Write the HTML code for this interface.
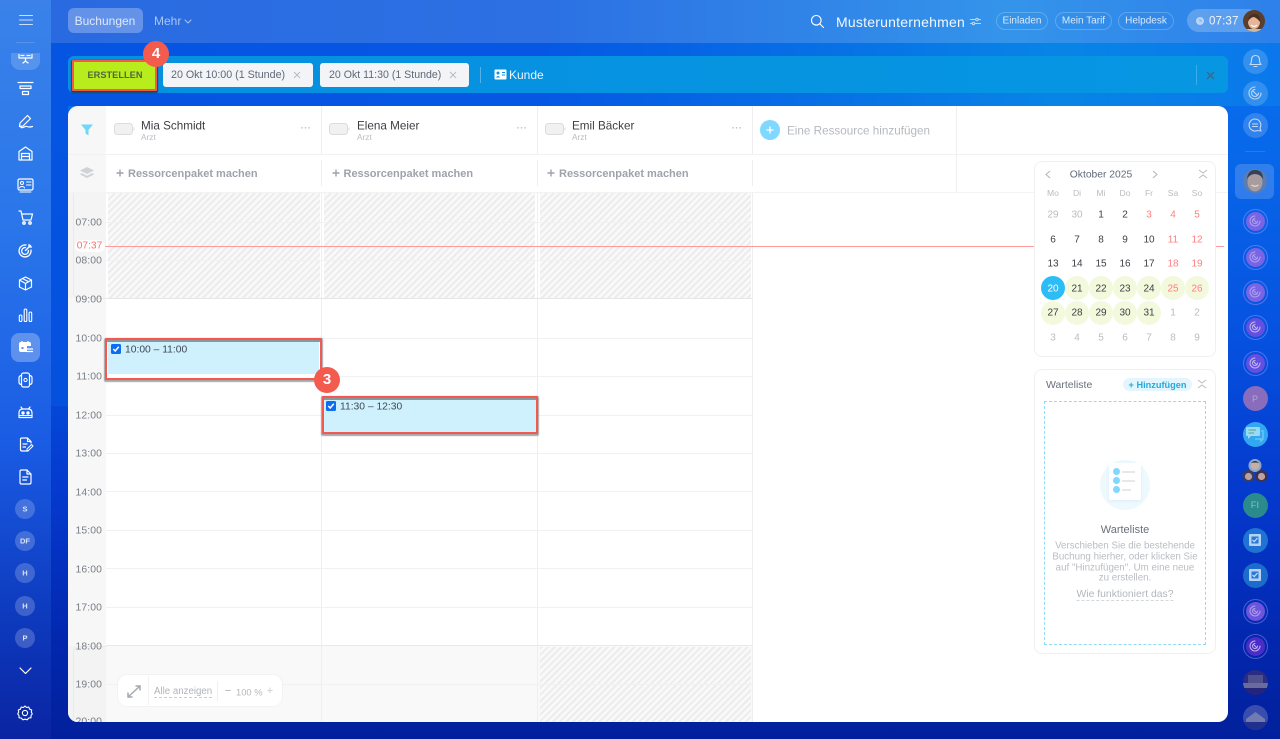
<!DOCTYPE html>
<html lang="de"><head><meta charset="utf-8"><title>Buchungen</title>
<style>
*{box-sizing:border-box}
html,body{margin:0;padding:0;width:1280px;height:739px;overflow:hidden;background:#0a40c8}
#w{left:0;top:0;width:1280px;height:739px;overflow:hidden;filter:blur(.35px);font-family:"Liberation Sans",sans-serif;background:linear-gradient(180deg,#0a74ee 0,#0868ea 20%,#0652e0 45%,#0438cc 68%,#0226ac 88%,#02209c 100%)}
div,span,svg{position:absolute}
.l{white-space:nowrap;transform:translateY(-50%)}
.c{white-space:nowrap;transform:translate(-50%,-50%)}
.i{fill:none;stroke:#fff;stroke-width:1.4;stroke-linecap:round;stroke-linejoin:round}
.g{height:1px;background:#f1f1f1;left:106px;width:646px}
.v{width:1px;background:#efefef}
.h{background:repeating-linear-gradient(135deg,#ececec 0 2px,#f9f9f9 2px 4.7px)}
.tm{font-size:10.4px;color:#777d86;letter-spacing:.1px}
.nm{font-size:11.7px;color:#3c3f44}
.ar{font-size:8.3px;color:#b9bcc1}
.dots{font-size:9px;color:#b5b8bc;font-weight:bold;letter-spacing:.5px}
.rp{font-size:11px;font-weight:bold;color:#9ea3ab}
.ch{height:24px;top:63px;background:#f2f4f7;border-radius:3px}
.pl{height:18px;top:12px;border:1px solid rgba(255,255,255,.22);border-radius:9px}
.pt{font-size:10px;color:#dbe9fb}
.sc{width:20px;height:20px;left:15px;border-radius:50%;background:rgba(255,255,255,.2)}
.rc{width:25px;height:25px;left:1242.5px;border-radius:50%;background:rgba(255,255,255,.17)}
.pc{width:25px;height:25px;left:1242.5px;border-radius:50%;border:1px solid rgba(190,170,255,.4)}
.pc i{position:absolute;left:2px;top:2px;width:19px;height:19px;border-radius:50%;background:#7864e4}
.d{font-size:10px;color:#3c3f44}
.m{font-size:10px;color:#b9bcc1}
.r{font-size:10px;color:#ff7f7f}
.w{font-size:8.6px;color:#b9bcc1}
.gc{width:24px;height:24px;border-radius:50%;background:#f3f9dd}
.bdg{width:26px;height:26px;border-radius:50%;background:#f45b4f;color:#fff;font-size:15px;font-weight:bold;text-align:center;line-height:26px;z-index:5}
.p{font-size:9.75px;color:#b9bdc3}
</style></head><body><div id="w">

<!-- background shaping -->
<div style="left:51px;top:43px;width:1229px;height:63px;background:linear-gradient(90deg,#0654e2 0,#0658e4 40%,#0884e6 82%,#0a78ec 100%)"></div>
<div style="left:51px;top:106px;width:17px;height:300px;background:linear-gradient(180deg,#0654e2,#0650de)"></div>

<!-- left rail + top bar -->
<div style="left:0;top:0;width:51px;height:739px;background:linear-gradient(180deg,#3a82ea 0,#2a76ea 30%,#1a5ce4 60%,#0e3cc0 82%,#0a24a2 100%)"></div>
<div style="left:51px;top:0;width:1229px;height:43px;background:linear-gradient(90deg,#2a6ae0 0,#2c70e4 40%,#3494ea 78%,#2e80ea 100%)"></div>

<!-- top bar -->
<svg style="left:19px;top:14px" width="14" height="12" class="i"><path d="M0.5 1.5H13.5M0.5 6H13.5M0.5 10.5H13.5" stroke-width="1" opacity=".75"/></svg>
<div style="left:16px;top:42px;width:19px;height:1px;background:rgba(255,255,255,.15)"></div>
<div style="left:68px;top:8px;width:75px;height:25px;border-radius:6px;background:rgba(255,255,255,.27)"></div>
<div class="c" style="left:105px;top:21px;font-size:12px;color:#dfe9fb">Buchungen</div>
<div class="l" style="left:154px;top:21px;font-size:12px;color:#a9c6f5">Mehr</div>
<svg style="left:184px;top:19px" width="8" height="5" class="i"><path d="M1 1L4 4L7 1" stroke="#a9c6f5" stroke-width="1"/></svg>

<svg style="left:810px;top:14px" width="15" height="15" class="i"><circle cx="6.3" cy="6.3" r="4.8" stroke-width="1.1"/><path d="M10 10L13.5 13.5" stroke-width="1.1"/></svg>
<div class="l" style="left:836px;top:21.5px;font-size:14px;color:#f2f7fe;letter-spacing:.22px">Musterunternehmen</div>
<svg style="left:970px;top:17px" width="11" height="9" class="i" opacity=".65"><path d="M0.5 2.5H10.5M0.5 6.5H10.5" stroke-width="1"/><circle cx="7" cy="2.5" r="1.3" fill="#5a9cea" stroke-width="1"/><circle cx="3.5" cy="6.5" r="1.3" fill="#5a9cea" stroke-width="1"/></svg>
<div class="pl" style="left:996px;width:52px"></div><div class="c pt" style="left:1022px;top:20.5px">Einladen</div>
<div class="pl" style="left:1055px;width:57px"></div><div class="c pt" style="left:1083.5px;top:20.5px">Mein Tarif</div>
<div class="pl" style="left:1118px;width:56px"></div><div class="c pt" style="left:1146px;top:20.5px">Helpdesk</div>
<div style="left:1187px;top:9px;width:73px;height:23px;border-radius:12px;background:rgba(255,255,255,.22)"></div>
<svg style="left:1196px;top:17px" width="8" height="8"><circle cx="4" cy="4" r="4" fill="#b8d4f8"/><path d="M4 2V4H6" stroke="#6fa0e8" stroke-width=".8" fill="none"/></svg>
<div class="l" style="left:1209px;top:21px;font-size:11.6px;color:#f0f6fe;letter-spacing:.1px">07:37</div>
<svg style="left:1243px;top:10px" width="22" height="22"><defs><clipPath id="a1"><circle cx="11" cy="11" r="11"/></clipPath></defs><g clip-path="url(#a1)"><rect width="22" height="22" fill="#5b3f2c"/><ellipse cx="11" cy="12" rx="6" ry="7" fill="#e6b697"/><path d="M5 12C5 5 9 4 12 4C16 4 18 8 17 12C15 9 12 7 10 7C8 8 6 9 5 12Z" fill="#4a2f20"/><path d="M8 15C10 17 12 17 14 15" stroke="#fff" stroke-width="1.2" fill="none"/><rect y="19" width="22" height="3" fill="#c8b8a8"/></g></svg>

<!-- left nav -->
<div style="left:11px;top:53px;width:29px;height:17px;border-radius:0 0 9px 9px;background:rgba(255,255,255,.17)"></div>
<svg style="left:18px;top:54px" width="15" height="10" class="i"><path d="M1 0V4H14V0M3 1.5H6M9 1.5H12M7.5 4V7M5 9L7.5 7L10 9" stroke-width="1.2"/></svg>
<svg style="left:17px;top:81px" width="17" height="15" class="i"><path d="M1 1.5H16M3 5H14V7.5H3ZM5.5 10.5H11.5V13.5H5.5Z" stroke-width="1.2"/></svg>
<svg style="left:18px;top:114px" width="16" height="15" class="i"><path d="M2 9L9.5 1.5L12.5 4.5L5 12L1.5 12.5ZM3 13.5C6 14.5 7 11.5 9 12.5C11 13.5 12 13 14.5 12.5" stroke-width="1.2"/></svg>
<svg style="left:18px;top:146px" width="15" height="15" class="i"><path d="M1 5.5L7.5 1L14 5.5V14H1ZM3.5 14V7.5H11.5V14M3.5 10.5H11.5" stroke-width="1.2"/></svg>
<svg style="left:17px;top:178px" width="17" height="15" class="i"><rect x="1" y="1" width="15" height="11" rx="1.5" stroke-width="1.2"/><circle cx="5" cy="5" r="1.5" stroke-width="1"/><path d="M2.5 10C3 8 7 8 7.5 10M9.5 4H14M9.5 7H14M3 14H14" stroke-width="1"/></svg>
<svg style="left:18px;top:210px" width="16" height="15" class="i"><path d="M1 1H3L5 10H13L14.5 4H3.5" stroke-width="1.2"/><circle cx="6" cy="13" r="1.2"/><circle cx="12" cy="13" r="1.2"/></svg>
<svg style="left:18px;top:243px" width="15" height="15" class="i"><path d="M8 2A6 6 0 1 0 13 7M7.5 4.6A3.4 3.4 0 1 0 10.4 7.5M7.5 7.5L12.5 2.5M11 1.5V4H13.5" stroke-width="1.3"/></svg>
<svg style="left:18px;top:276px" width="15" height="15" class="i"><path d="M7.5 1L13.5 4V11L7.5 14L1.5 11V4ZM1.5 4L7.5 7.5L13.5 4M7.5 7.5V14M4.5 2.5L10.5 5.7" stroke-width="1.2"/></svg>
<svg style="left:18px;top:308px" width="15" height="14" class="i"><rect x="1.3" y="7" width="2.6" height="6.5" rx="1.3" stroke-width="1.1"/><rect x="6.2" y="1" width="2.6" height="12.5" rx="1.3" stroke-width="1.1"/><rect x="11.1" y="4" width="2.6" height="9.5" rx="1.3" stroke-width="1.1"/></svg>
<div style="left:11px;top:333px;width:29px;height:29px;border-radius:8px;background:rgba(255,255,255,.28)"></div>
<svg style="left:18px;top:340px" width="16" height="15"><path d="M1 4Q1 2 3 2H11Q13 2 13 4V6H9V12H3Q1 12 1 10Z" fill="#fff"/><path d="M4 1V3M10 1V3" stroke="#fff" stroke-width="1.3"/><path d="M9 9H15M9 11.5H15" stroke="#fff" stroke-width="1.2"/><rect x="3.5" y="7" width="2" height="2" fill="#5a90ee"/></svg>
<svg style="left:18px;top:372px" width="15" height="16" class="i"><rect x="3.5" y="1" width="8" height="14" rx="2" stroke-width="1.2"/><circle cx="7.5" cy="8" r="1.6" stroke-width="1"/><path d="M3.5 3.5Q1 3.5 1 6V10Q1 12.5 3.5 12.5M11.5 3.5Q14 3.5 14 6V10Q14 12.5 11.5 12.5" stroke-width="1.2"/></svg>
<svg style="left:18px;top:405px" width="15" height="14" class="i"><path d="M1 8Q1 4 5 4H10Q14 4 14 8V12.5H1ZM3 2L4.5 4M12 2L10.5 4" stroke-width="1.2"/><circle cx="5" cy="8" r="1" fill="#fff"/><circle cx="10" cy="8" r="1" fill="#fff"/><path d="M1 10.5H14" stroke-width="1"/></svg>
<svg style="left:19px;top:437px" width="15" height="15" class="i"><path d="M9 14H3Q1.5 14 1.5 12.5V2.5Q1.5 1 3 1H8.5L12 4.5V6M8.5 1V4.5H12M4 7H8M4 10H6.5" stroke-width="1.2"/><path d="M8 12L12.5 7.5L14 9L9.5 13.5L8 14Z" stroke-width="1"/></svg>
<svg style="left:19px;top:469px" width="13" height="16" class="i"><path d="M2.5 1H8L12 5V13.5Q12 15 10.5 15H2.5Q1 15 1 13.5V2.5Q1 1 2.5 1ZM8 1V5H12M3.8 8H9M3.8 11H7.5" stroke-width="1.2"/></svg>
<div class="sc" style="top:499px"></div><div class="c" style="left:25px;top:509px;font-size:7.5px;font-weight:bold;color:#d8e4fb">S</div>
<div class="sc" style="top:531px"></div><div class="c" style="left:25px;top:541px;font-size:7.5px;font-weight:bold;color:#d8e4fb">DF</div>
<div class="sc" style="top:563px"></div><div class="c" style="left:25px;top:573px;font-size:7.5px;font-weight:bold;color:#d8e4fb">H</div>
<div class="sc" style="top:596px"></div><div class="c" style="left:25px;top:606px;font-size:7.5px;font-weight:bold;color:#d8e4fb">H</div>
<div class="sc" style="top:628px"></div><div class="c" style="left:25px;top:638px;font-size:7.5px;font-weight:bold;color:#d8e4fb">P</div>
<svg style="left:19px;top:667px" width="13" height="8" class="i"><path d="M1 1L6.5 6.5L12 1" stroke-width="1.2"/></svg>
<svg style="left:17px;top:705px" width="16" height="16" class="i"><path d="M8 1L9.6 2.5L11.8 2.1L12.6 4.2L14.7 5L14.3 7.2L15.3 8.8L14 10.6L14 12.8L11.8 13L10.2 14.8L8 14.2L5.8 14.8L4.2 13L2 12.8L2 10.6L.7 8.8L1.7 7.2L1.3 5L3.4 4.2L4.2 2.1L6.4 2.5Z" stroke-width="1.1"/><circle cx="8" cy="8" r="2.6" stroke-width="1.1"/></svg>

<!-- right rail -->
<div class="rc" style="top:48.5px"></div>
<svg style="left:1249px;top:54px" width="13" height="14" class="i" opacity=".7"><path d="M1 10.5Q2.5 9 2.5 6Q2.5 1.5 6.5 1.5Q10.5 1.5 10.5 6Q10.5 9 12 10.5ZM5 12.5H8" stroke-width="1.1"/></svg>
<div class="rc" style="top:80.5px"></div>
<svg style="left:1248px;top:86px" width="14" height="14" class="i" opacity=".65"><path d="M7 1A6 6 0 1 0 13 7M7 3.5A3.5 3.5 0 1 0 10.5 7M5 5L9.5 9.5" stroke-width="1.1"/></svg>
<div class="rc" style="top:112.5px"></div>
<svg style="left:1248px;top:118px" width="14" height="14" class="i" opacity=".7"><path d="M7 1A6 6 0 1 0 9.5 12.5L13 13L12 10A6 6 0 0 0 7 1ZM4.5 6H9.5M9.5 8.5H4.5" stroke-width="1.1"/></svg>
<div style="left:1245px;top:151px;width:20px;height:1px;background:rgba(255,255,255,.12)"></div>
<div style="left:1235px;top:164px;width:39px;height:35px;border-radius:6px;background:rgba(255,255,255,.17)"></div>
<svg style="left:1243px;top:169px" width="24" height="24"><defs><clipPath id="a2"><circle cx="12" cy="12" r="12"/></clipPath></defs><g clip-path="url(#a2)"><rect width="24" height="24" fill="#5d7db0"/><ellipse cx="12" cy="13" rx="7.5" ry="9.5" fill="#a89c9e"/><path d="M4 10Q5 1 12 1Q20 1 20 10Q17 5 12 5Q7 5 4 10Z" fill="#364058"/><path d="M8.5 16Q12 18.5 15.5 16" stroke="#dcdcde" stroke-width="1.2" fill="none"/></g></svg>

<div class="pc" style="top:208.5px"><i></i></div><div class="pc" style="top:244.5px"><i></i></div><div class="pc" style="top:279.5px"><i></i></div><div class="pc" style="top:314.5px"><i style="background:#6450e0"></i></div><div class="pc" style="top:350.5px"><i style="background:#6450e0"></i></div><div class="pc" style="top:598.5px"><i style="background:#6c54dc"></i></div><div class="pc" style="top:633.5px"><i style="background:#4a2cc8"></i></div>
<svg style="left:1249px;top:215px" width="12" height="12" class="i" opacity=".4"><path d="M6 1A5 5 0 1 0 11 6M6 3.5A2.5 2.5 0 1 0 8.5 6M4.5 4.5L8 8" stroke-width="1"/></svg>
<svg style="left:1249px;top:251px" width="12" height="12" class="i" opacity=".4"><path d="M6 1A5 5 0 1 0 11 6M6 3.5A2.5 2.5 0 1 0 8.5 6M4.5 4.5L8 8" stroke-width="1"/></svg>
<svg style="left:1249px;top:286px" width="12" height="12" class="i" opacity=".4"><path d="M6 1A5 5 0 1 0 11 6M6 3.5A2.5 2.5 0 1 0 8.5 6M4.5 4.5L8 8" stroke-width="1"/></svg>
<svg style="left:1249px;top:321px" width="12" height="12" class="i" opacity=".6"><path d="M6 1A5 5 0 1 0 11 6M6 3.5A2.5 2.5 0 1 0 8.5 6M4.5 4.5L8 8" stroke-width="1"/></svg>
<svg style="left:1249px;top:357px" width="12" height="12" class="i" opacity=".6"><path d="M6 1A5 5 0 1 0 11 6M6 3.5A2.5 2.5 0 1 0 8.5 6M4.5 4.5L8 8" stroke-width="1"/></svg>
<svg style="left:1249px;top:605px" width="12" height="12" class="i" opacity=".45"><path d="M6 1A5 5 0 1 0 11 6M6 3.5A2.5 2.5 0 1 0 8.5 6M4.5 4.5L8 8" stroke-width="1"/></svg>
<svg style="left:1249px;top:640px" width="12" height="12" class="i" opacity=".65"><path d="M6 1A5 5 0 1 0 11 6M6 3.5A2.5 2.5 0 1 0 8.5 6M4.5 4.5L8 8" stroke-width="1"/></svg>

<div class="rc" style="top:386px;background:#8a6cbc"></div><div class="c" style="left:1255px;top:398.5px;font-size:9px;color:#b5a5d8">P</div>
<div class="rc" style="top:421.5px;background:#32a8f0"></div>
<svg style="left:1245px;top:426px" width="20" height="17"><path d="M1 2Q1 1 2 1H14Q15 1 15 2V9Q15 10 14 10H6L3 13V10H2Q1 10 1 9Z" fill="#9cd8f8"/><path d="M3.5 4H11" stroke="#5cb088" stroke-width="1.2"/><path d="M3.5 7H9" stroke="#5cb088" stroke-width="1.2"/><path d="M16 5H18V13L16 15V13H10" fill="none" stroke="#6cc4f4" stroke-width="1.5"/></svg>
<svg style="left:1242px;top:457px" width="26" height="26"><circle cx="13" cy="8.5" r="6.5" fill="#8fa8c8"/><circle cx="13" cy="8.5" r="4.2" fill="#c4b0a8"/><path d="M9 6Q13 2 17 6Q13 5 9 6Z" fill="#28324a"/><circle cx="6.5" cy="19" r="6" fill="#3c3c58"/><circle cx="6.5" cy="19.5" r="3.6" fill="#b8a0a0"/><circle cx="19.5" cy="19" r="6" fill="#3c3250"/><circle cx="19.5" cy="19.5" r="3.6" fill="#c0a0a0"/></svg>
<div class="rc" style="top:492.5px;background:#2a8a8c"></div><div class="c" style="left:1255px;top:505px;font-size:9px;color:#8ac0c8;letter-spacing:.3px">FI</div>
<div class="rc" style="top:527.5px;background:#2072d4"></div>
<svg style="left:1248px;top:533px" width="14" height="14"><rect x="1" y="1" width="12" height="12" rx="1" fill="#b4d2f4"/><rect x="3.5" y="3.5" width="7" height="7" fill="#2a78d8"/><path d="M4.5 7L6.2 8.6L9.5 5" stroke="#c8dff8" stroke-width="1.2" fill="none"/></svg>
<div class="rc" style="top:562.5px;background:#1c6ccc"></div>
<svg style="left:1248px;top:568px" width="14" height="14"><rect x="1" y="1" width="12" height="12" rx="1" fill="#b4d2f4"/><rect x="3.5" y="3.5" width="7" height="7" fill="#2a78d8"/><path d="M4.5 7L6.2 8.6L9.5 5" stroke="#c8dff8" stroke-width="1.2" fill="none"/></svg>
<svg style="left:1242.5px;top:669.5px" width="25" height="25"><defs><clipPath id="a3"><circle cx="12.5" cy="12.5" r="12.5"/></clipPath></defs><g clip-path="url(#a3)"><rect width="25" height="25" fill="#2c2c80"/><rect x="5" y="5" width="15" height="9" fill="#50508e"/><rect x="0" y="13" width="25" height="5" fill="#6a6a9c"/><rect y="18" width="25" height="7" fill="#24247a"/></g></svg>
<svg style="left:1242.5px;top:704.5px" width="25" height="25"><defs><clipPath id="a4"><circle cx="12.5" cy="12.5" r="12.5"/></clipPath></defs><g clip-path="url(#a4)"><rect width="25" height="25" fill="#3a4cae"/><path d="M3 14L12.5 7L22 14V17H3Z" fill="#707cb0"/><rect y="17" width="25" height="8" fill="#20308e"/></g></svg>

<!-- action bar -->
<div style="left:68px;top:56px;width:1160px;height:37px;border-radius:6px;background:linear-gradient(90deg,#0690e0,#0696e2)"></div>
<div style="left:72px;top:60px;width:85px;height:30.5px;background:#b9ec1c;border:2px solid #f4584e;box-shadow:0 1px 1px 1px rgba(30,40,60,.7);border-radius:1px"></div>
<div class="c" style="left:115px;top:75px;font-size:9.2px;font-weight:bold;color:#50663e;letter-spacing:.05px">ERSTELLEN</div>
<div class="bdg" style="left:143px;top:41px">4</div>
<div class="ch" style="left:163px;width:150px"></div><div class="l" style="left:171px;top:75px;font-size:10.7px;color:#5f6a76">20 Okt 10:00 (1 Stunde)</div>
<svg style="left:293px;top:71px" width="8" height="8"><path d="M1 1L7 7M7 1L1 7" stroke="#b6bcc3" stroke-width="1"/></svg>
<div class="ch" style="left:320px;width:149px"></div><div class="l" style="left:329px;top:75px;font-size:10.6px;color:#5f6a76">20 Okt 11:30 (1 Stunde)</div>
<svg style="left:449px;top:71px" width="8" height="8"><path d="M1 1L7 7M7 1L1 7" stroke="#b6bcc3" stroke-width="1"/></svg>
<div style="left:480px;top:67px;width:1px;height:16px;background:rgba(255,255,255,.3)"></div>
<svg style="left:494px;top:69px" width="13" height="11"><rect x=".5" y=".5" width="12" height="10" rx="1" fill="#fff"/><circle cx="4" cy="4" r="1.5" fill="#0a92e0"/><path d="M1.8 8.5Q4 5.5 6.2 8.5Z" fill="#0a92e0"/><path d="M8 3.5H11M8 6H11" stroke="#0a92e0" stroke-width="1"/></svg>
<div class="l" style="left:509px;top:75px;font-size:12px;color:#eaf6fe">Kunde</div>
<div style="left:1196px;top:65px;width:1px;height:20px;background:rgba(255,255,255,.22)"></div>
<svg style="left:1206px;top:71px" width="9" height="9"><path d="M1 1L8 8M8 1L1 8" stroke="#44657f" stroke-width="1.3"/></svg>

<!-- card -->
<div style="left:68px;top:106px;width:1160px;height:616px;border-radius:10px;overflow:hidden;background:#fff">
 <div style="left:0;top:0;width:38px;height:616px;background:#f7f7f7"></div>
 <div style="left:0;top:86px;width:38px;height:106px;background:#f4f4f4"></div>
 <div style="left:5px;top:86px;width:34px;height:107px;border:1px solid #eaeaea;border-top:0;border-right:0;border-radius:0 0 0 6px"></div>
 <div style="left:38px;top:540px;width:646px;height:76px;background:#f9f9f9"></div>
 <div style="left:0;top:540px;width:38px;height:76px;background:#f3f3f3"></div>
 <div style="left:5px;top:540px;width:34px;height:76px;border:1px solid #eaeaea;border-bottom:0;border-right:0;border-radius:6px 0 0 0"></div>
 <div class="h" style="left:40px;top:86px;width:212px;height:106px"></div>
 <div class="h" style="left:256px;top:86px;width:211px;height:106px"></div>
 <div class="h" style="left:472px;top:86px;width:211px;height:106px"></div>
 <div class="h" style="left:472px;top:541px;width:211px;height:75px"></div>
</div>
<!-- header lines -->
<div class="g" style="left:68px;top:154px;width:1160px"></div>
<div class="g" style="left:68px;top:192px;width:1160px;background:#f3f3f3"></div>
<div class="v" style="left:321px;top:106px;height:48px"></div><div class="v" style="left:537px;top:106px;height:48px"></div><div class="v" style="left:752px;top:106px;height:48px"></div><div class="v" style="left:956px;top:106px;height:86px"></div>
<div class="v" style="left:321px;top:160px;height:26px"></div><div class="v" style="left:537px;top:160px;height:26px"></div><div class="v" style="left:752px;top:160px;height:26px"></div>
<div class="v" style="left:321px;top:192px;height:530px"></div><div class="v" style="left:537px;top:192px;height:530px"></div><div class="v" style="left:752px;top:192px;height:530px"></div>
<!-- grid lines -->
<div class="g" style="top:222px"></div><div class="g" style="top:260px"></div><div class="g" style="top:298px;background:#e6e6e6"></div><div class="g" style="top:338px"></div><div class="g" style="top:376px"></div><div class="g" style="top:415px"></div><div class="g" style="top:453px"></div><div class="g" style="top:491px"></div><div class="g" style="top:530px"></div><div class="g" style="top:568px"></div><div class="g" style="top:607px"></div><div class="g" style="top:645px;background:#e9e9e9"></div><div class="g" style="top:684px"></div>

<!-- filter column -->
<svg style="left:81px;top:124px" width="12" height="12"><path d="M0 .5H12L7.5 6V11.5L4.5 9.5V6Z" fill="#72d6fb"/></svg>
<svg style="left:80px;top:167px" width="14" height="12"><path d="M7 0L14 3.5L7 7L0 3.5Z" fill="#cfd2d6"/><path d="M1.5 6L7 8.8L12.5 6L14 7.5L7 11L0 7.5Z" fill="#cfd2d6"/></svg>

<!-- resource headers -->
<svg style="left:114px;top:123px" width="21" height="12"><rect x=".5" y=".5" width="18" height="11" rx="3" fill="#f1f1f1" stroke="#dcdcdc"/><path d="M20 4.5V7.5" stroke="#dcdcdc"/></svg>
<div class="l nm" style="left:141px;top:126px">Mia Schmidt</div><div class="l ar" style="left:141px;top:137px">Arzt</div><div class="c dots" style="left:306px;top:128px">···</div>
<svg style="left:329px;top:123px" width="21" height="12"><rect x=".5" y=".5" width="18" height="11" rx="3" fill="#f1f1f1" stroke="#dcdcdc"/><path d="M20 4.5V7.5" stroke="#dcdcdc"/></svg>
<div class="l nm" style="left:357px;top:126px">Elena Meier</div><div class="l ar" style="left:357px;top:137px">Arzt</div><div class="c dots" style="left:522px;top:128px">···</div>
<svg style="left:545px;top:123px" width="21" height="12"><rect x=".5" y=".5" width="18" height="11" rx="3" fill="#f1f1f1" stroke="#dcdcdc"/><path d="M20 4.5V7.5" stroke="#dcdcdc"/></svg>
<div class="l nm" style="left:572px;top:126px">Emil Bäcker</div><div class="l ar" style="left:572px;top:137px">Arzt</div><div class="c dots" style="left:737px;top:128px">···</div>
<div style="left:760px;top:120px;width:20px;height:20px;border-radius:50%;background:#7fd8ff"></div><svg style="left:766px;top:126px" width="8" height="8"><path d="M4 .5V7.5M.5 4H7.5" stroke="#fff" stroke-width="1.3"/></svg>
<div class="l" style="left:787px;top:131px;font-size:11.7px;color:#b5b9be">Eine Ressource hinzufügen</div>

<svg style="left:116px;top:169px" width="8" height="8"><path d="M4 .5V7.5M.5 4H7.5" stroke="#9ea3ab" stroke-width="1.4"/></svg><div class="l rp" style="left:128px;top:173.5px">Ressorcenpaket machen</div>
<svg style="left:332px;top:169px" width="8" height="8"><path d="M4 .5V7.5M.5 4H7.5" stroke="#9ea3ab" stroke-width="1.4"/></svg><div class="l rp" style="left:343.5px;top:173.5px">Ressorcenpaket machen</div>
<svg style="left:547px;top:169px" width="8" height="8"><path d="M4 .5V7.5M.5 4H7.5" stroke="#9ea3ab" stroke-width="1.4"/></svg><div class="l rp" style="left:559px;top:173.5px">Ressorcenpaket machen</div>

<!-- time labels -->
<div class="l tm" style="right:1178px;top:222.5px">07:00</div><div class="l tm" style="right:1178px;top:261px">08:00</div><div class="l tm" style="right:1178px;top:299.5px">09:00</div><div class="l tm" style="right:1178px;top:338.5px">10:00</div><div class="l tm" style="right:1178px;top:376.5px">11:00</div><div class="l tm" style="right:1178px;top:415.5px">12:00</div><div class="l tm" style="right:1178px;top:453.5px">13:00</div><div class="l tm" style="right:1178px;top:492.5px">14:00</div><div class="l tm" style="right:1178px;top:530.5px">15:00</div><div class="l tm" style="right:1178px;top:569.5px">16:00</div><div class="l tm" style="right:1178px;top:607.5px">17:00</div><div class="l tm" style="right:1178px;top:646.5px">18:00</div><div class="l tm" style="right:1178px;top:684.5px">19:00</div>
<div style="left:68px;top:716px;width:38px;height:6px;overflow:hidden"><div class="l tm" style="right:4px;top:6px">20:00</div></div>

<!-- now line -->
<div style="left:105px;top:246px;width:1119px;height:1px;background:#ff9a9a"></div>
<div class="c" style="left:89.5px;top:246px;width:30px;height:12px;background:#fff;border-radius:6px"></div>
<div class="c" style="left:89.5px;top:246px;font-size:10.2px;color:#fb7070">07:37</div>

<!-- events -->
<div style="left:105px;top:338px;width:217px;height:42px;background:#fff;border:2px solid #f4584e;box-shadow:0 1px 1px 1px rgba(60,60,60,.45);border-radius:1px"></div>
<div style="left:107px;top:340px;width:213px;height:2px;background:#8a989e"></div>
<div style="left:108px;top:342px;width:211px;height:32px;background:#cff1fd"></div>
<svg style="left:111px;top:344px" width="10" height="10"><rect width="10" height="10" rx="1.5" fill="#0b6ef0"/><path d="M2.3 5L4.2 7L7.8 2.8" stroke="#fff" stroke-width="1.5" fill="none"/></svg>
<div class="l" style="left:125px;top:349.5px;font-size:10.3px;color:#3e4854">10:00 – 11:00</div>

<div style="left:322px;top:396px;width:216px;height:38px;background:#cff1fd;border:2px solid #f4584e;box-shadow:0 1px 1px 1px rgba(60,60,60,.45);border-radius:1px"></div>
<div style="left:324px;top:398px;width:212px;height:2px;background:#8a989e"></div>
<svg style="left:326px;top:401px" width="10" height="10"><rect width="10" height="10" rx="1.5" fill="#0b6ef0"/><path d="M2.3 5L4.2 7L7.8 2.8" stroke="#fff" stroke-width="1.5" fill="none"/></svg>
<div class="l" style="left:340px;top:407px;font-size:10.3px;color:#3e4854">11:30 – 12:30</div>
<div class="bdg" style="left:314px;top:367px">3</div>

<!-- zoom control -->
<div style="left:117px;top:674px;width:166px;height:33px;border-radius:10px;background:#fff;border:1px solid #f2f2f2"></div>
<div class="v" style="left:148px;top:676px;height:29px;background:#f1f1f1"></div><div class="v" style="left:217px;top:681px;height:20px;background:#f1f1f1"></div>
<svg style="left:127px;top:685px" width="14" height="13"><path d="M1 12L13 1M8.5 1H13V5.5M1 7.5V12H5.5" stroke="#a4a9b0" stroke-width="1.5" fill="none"/></svg>
<div class="l" style="left:154px;top:692px;font-size:9.7px;color:#b0b4ba;border-bottom:1px dashed #c9ccd0;line-height:11px">Alle anzeigen</div>
<div class="c" style="left:228px;top:691px;font-size:11px;color:#a4a9b0">−</div>
<div class="l" style="left:236px;top:691.5px;font-size:9.4px;color:#b5b8bd">100 %</div>
<div class="c" style="left:270px;top:691px;font-size:11px;color:#c8cbcf">+</div>

<!-- calendar -->
<div style="left:1034px;top:161px;width:182px;height:196px;background:#fff;border:1px solid #f0f0f0;border-radius:8px"></div>
<svg style="left:1045px;top:170px" width="6" height="9"><path d="M5 1L1 4.5L5 8" stroke="#b3b7bd" stroke-width="1.1" fill="none"/></svg>
<div class="c" style="left:1101px;top:174.5px;font-size:10.3px;color:#606a78">Oktober 2025</div>
<svg style="left:1152px;top:170px" width="6" height="9"><path d="M1 1L5 4.5L1 8" stroke="#b3b7bd" stroke-width="1.1" fill="none"/></svg>
<svg style="left:1198px;top:169px" width="10" height="10"><path d="M1 1L5 4L9 1M1 9L5 6L9 9" stroke="#b8bcc2" stroke-width="1" fill="none"/></svg>
<div class="c w" style="left:1053px;top:193px">Mo</div><div class="c w" style="left:1077px;top:193px">Di</div><div class="c w" style="left:1101px;top:193px">Mi</div><div class="c w" style="left:1125px;top:193px">Do</div><div class="c w" style="left:1149px;top:193px">Fr</div><div class="c w" style="left:1173px;top:193px">Sa</div><div class="c w" style="left:1197px;top:193px">So</div>

<div class="c m" style="left:1053px;top:215px">29</div><div class="c m" style="left:1077px;top:215px">30</div><div class="c d" style="left:1101px;top:215px">1</div><div class="c d" style="left:1125px;top:215px">2</div><div class="c r" style="left:1149px;top:215px">3</div><div class="c r" style="left:1173px;top:215px">4</div><div class="c r" style="left:1197px;top:215px">5</div>
<div class="c d" style="left:1053px;top:239.5px">6</div><div class="c d" style="left:1077px;top:239.5px">7</div><div class="c d" style="left:1101px;top:239.5px">8</div><div class="c d" style="left:1125px;top:239.5px">9</div><div class="c d" style="left:1149px;top:239.5px">10</div><div class="c r" style="left:1173px;top:239.5px">11</div><div class="c r" style="left:1197px;top:239.5px">12</div>
<div class="c d" style="left:1053px;top:264px">13</div><div class="c d" style="left:1077px;top:264px">14</div><div class="c d" style="left:1101px;top:264px">15</div><div class="c d" style="left:1125px;top:264px">16</div><div class="c d" style="left:1149px;top:264px">17</div><div class="c r" style="left:1173px;top:264px">18</div><div class="c r" style="left:1197px;top:264px">19</div>
<div class="gc" style="left:1041px;top:276px;background:#2dbdf6"></div><div class="gc" style="left:1065px;top:276px"></div><div class="gc" style="left:1089px;top:276px"></div><div class="gc" style="left:1113px;top:276px"></div><div class="gc" style="left:1137px;top:276px"></div><div class="gc" style="left:1161px;top:276px"></div><div class="gc" style="left:1185px;top:276px"></div>
<div class="gc" style="left:1041px;top:301px"></div><div class="gc" style="left:1065px;top:301px"></div><div class="gc" style="left:1089px;top:301px"></div><div class="gc" style="left:1113px;top:301px"></div><div class="gc" style="left:1137px;top:301px"></div>
<div class="c d" style="left:1053px;top:288.5px;color:#fff">20</div><div class="c d" style="left:1077px;top:288.5px">21</div><div class="c d" style="left:1101px;top:288.5px">22</div><div class="c d" style="left:1125px;top:288.5px">23</div><div class="c d" style="left:1149px;top:288.5px">24</div><div class="c r" style="left:1173px;top:288.5px">25</div><div class="c r" style="left:1197px;top:288.5px">26</div>
<div class="c d" style="left:1053px;top:313px">27</div><div class="c d" style="left:1077px;top:313px">28</div><div class="c d" style="left:1101px;top:313px">29</div><div class="c d" style="left:1125px;top:313px">30</div><div class="c d" style="left:1149px;top:313px">31</div><div class="c m" style="left:1173px;top:313px">1</div><div class="c m" style="left:1197px;top:313px">2</div>
<div class="c m" style="left:1053px;top:338px">3</div><div class="c m" style="left:1077px;top:338px">4</div><div class="c m" style="left:1101px;top:338px">5</div><div class="c m" style="left:1125px;top:338px">6</div><div class="c m" style="left:1149px;top:338px">7</div><div class="c m" style="left:1173px;top:338px">8</div><div class="c m" style="left:1197px;top:338px">9</div>

<!-- waiting list -->
<div style="left:1034px;top:369px;width:182px;height:285px;background:#fff;border:1px solid #f0f0f0;border-radius:8px"></div>
<div class="l" style="left:1046px;top:384.5px;font-size:10.5px;color:#68707c">Warteliste</div>
<div style="left:1123px;top:378px;width:69px;height:13px;border-radius:7px;background:#e3f6fe"></div>
<div class="c" style="left:1157.5px;top:384.5px;font-size:9.2px;font-weight:bold;color:#25a8dd">+ Hinzufügen</div>
<svg style="left:1197px;top:379px" width="10" height="10"><path d="M1 1L5 4L9 1M1 9L5 6L9 9" stroke="#b8bcc2" stroke-width="1" fill="none"/></svg>
<div style="left:1044px;top:401px;width:162px;height:244px;border:1px dashed #8fdcf8"></div>
<div style="left:1100px;top:460px;width:50px;height:50px;border-radius:50%;background:#eef9fe"></div>
<div style="left:1109px;top:463px;width:32px;height:37px;border-radius:2px;background:#fff;box-shadow:0 1px 3px rgba(120,180,210,.15)"></div>
<div style="left:1113px;top:468px;width:7px;height:7px;border-radius:50%;background:#7fd8ff"></div><div style="left:1113px;top:477px;width:7px;height:7px;border-radius:50%;background:#7fd8ff"></div><div style="left:1113px;top:486px;width:7px;height:7px;border-radius:50%;background:#7fd8ff"></div>
<div style="left:1122px;top:471px;width:13px;height:1.5px;background:#e8e8e8"></div><div style="left:1122px;top:480px;width:13px;height:1.5px;background:#e8e8e8"></div><div style="left:1122px;top:489px;width:9px;height:1.5px;background:#e8e8e8"></div>
<div class="c" style="left:1125px;top:529.5px;font-size:11px;color:#68707c">Warteliste</div>
<div class="c p" style="left:1125px;top:546px">Verschieben Sie die bestehende</div>
<div class="c p" style="left:1125px;top:557px">Buchung hierher, oder klicken Sie</div>
<div class="c p" style="left:1125px;top:567.5px">auf "Hinzufügen". Um eine neue</div>
<div class="c p" style="left:1125px;top:578px">zu erstellen.</div>
<div class="c" style="left:1125px;top:594.5px;font-size:10.4px;color:#b2b6bc;border-bottom:1px dashed #d5d7da;line-height:11px">Wie funktioniert das?</div>

</div></body></html>
